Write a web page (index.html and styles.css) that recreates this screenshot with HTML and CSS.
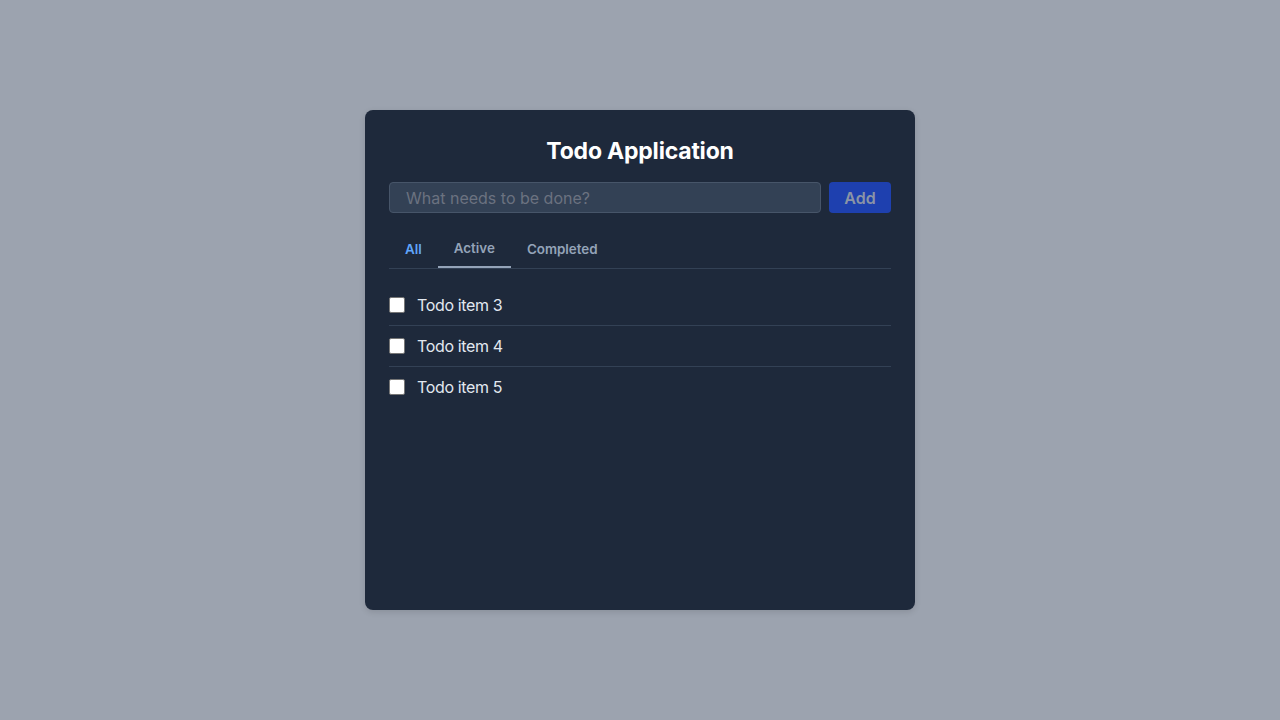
FILE: index.html
```html
<!DOCTYPE html>
<html>
<head>
<meta charset="utf-8">
<link rel="stylesheet" href="styles.css">
</head>
<body>
<div class="card">
  <h1 class="title">Todo Application</h1>
  <div class="add-row">
    <input class="new-todo" type="text" placeholder="What needs to be done?">
    <button class="add-btn">Add</button>
  </div>
  <div class="tabs">
    <div class="tab tab-all">All</div>
    <div class="tab tab-active">Active</div>
    <div class="tab">Completed</div>
  </div>
  <ul class="list">
    <li class="item"><span class="box"></span><span class="label">Todo item 3</span></li>
    <li class="item"><span class="box"></span><span class="label">Todo item 4</span></li>
    <li class="item"><span class="box"></span><span class="label">Todo item 5</span></li>
  </ul>
</div>
</body>
</html>
```

FILE: styles.css
```css
html, body {
  margin: 0;
  padding: 0;
}
body {
  background: #9ca3af;
  font-family: Inter, "Noto Sans", sans-serif;
  height: 720px;
  display: flex;
  align-items: center;
  justify-content: center;
}
.card {
  width: 550px;
  height: 500px;
  box-sizing: border-box;
  background: #1e293b;
  border-radius: 8px;
  padding: 24px;
  box-shadow: 0 2px 6px rgba(0,0,0,0.12);
}
.title {
  margin: 0 0 16px;
  text-align: center;
  color: #ffffff;
  font-size: 23px;
  line-height: 32px;
  font-weight: 700;
  letter-spacing: -0.2px;
  padding-top: 1px;
  height: 31px;
}
.add-row {
  display: flex;
  gap: 8px;
  height: 31px;
}
.new-todo {
  flex: 1;
  box-sizing: border-box;
  height: 31px;
  background: #334155;
  border: 1px solid #475569;
  border-radius: 4px;
  padding: 0 16px;
  font-family: inherit;
  font-size: 16px;
  color: #e2e8f0;
  outline: none;
}
.new-todo::placeholder {
  color: #6b7280;
}
.add-btn {
  width: 62px;
  height: 31px;
  background: #1e40af;
  border: none;
  border-radius: 4px;
  color: #8a94a6;
  font-family: inherit;
  font-size: 16px;
  font-weight: 600;
  padding: 0;
}
.tabs {
  display: flex;
  margin-top: 16px;
  border-bottom: 1px solid #334155;
}
.tab {
  padding: 0 16px;
  height: 37px;
  line-height: 41px;
  font-size: 13.4px;
  font-weight: 600;
  color: #94a3b8;
  border-bottom: 2px solid transparent;
}
.tab-all {
  color: #60a5fa;
}
.tab-active {
  border-bottom-color: #94a3b8;
  line-height: 39px;
}
.list {
  list-style: none;
  margin: 16px 0 0;
  padding: 0;
}
.item {
  display: flex;
  align-items: center;
  height: 40px;
  border-bottom: 1px solid #334155;
}
.item:last-child {
  border-bottom: none;
}
.box {
  width: 14px;
  height: 14px;
  background: #ffffff;
  border: 1px solid #767676;
  border-radius: 2px;
  margin-right: 12px;
}
.label {
  color: #e2e8f0;
  font-size: 16px;
  letter-spacing: -0.35px;
}
```
